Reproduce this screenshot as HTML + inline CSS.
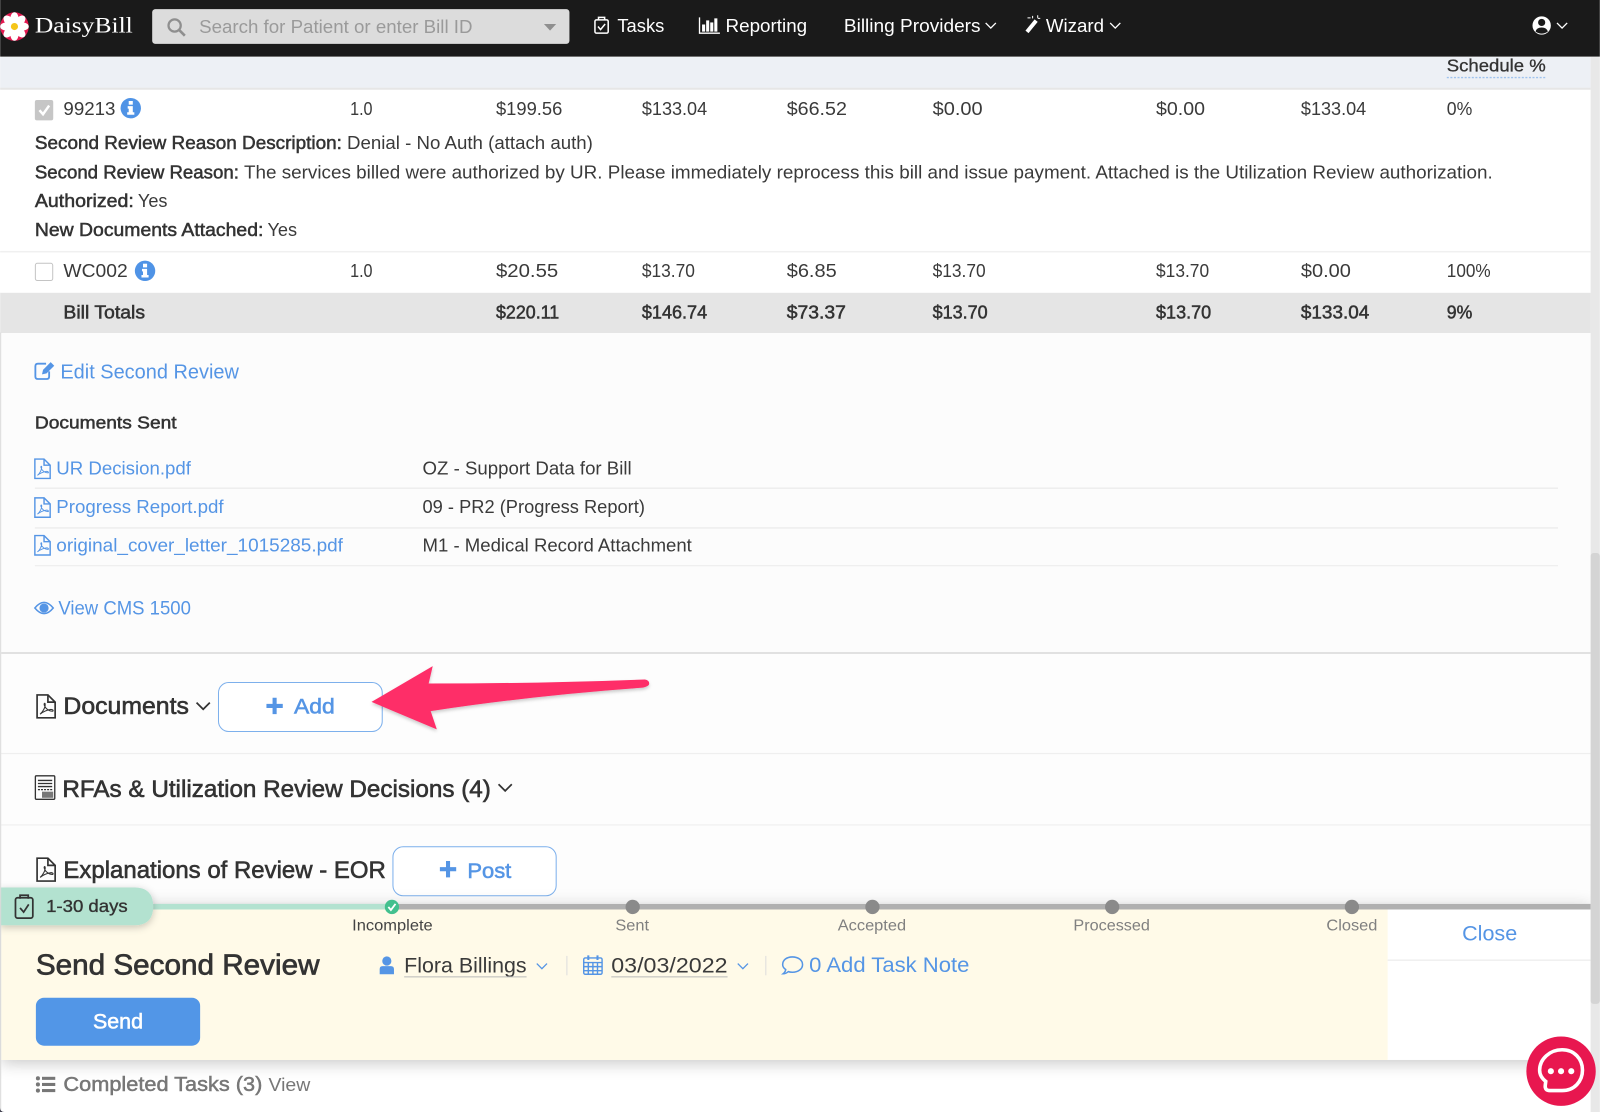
<!DOCTYPE html>
<html lang="en"><head><meta charset="utf-8"><title>DaisyBill</title>
<style>
html,body{margin:0;padding:0;background:#fff;overflow:hidden}
svg{display:block}
text{font-family:"Liberation Sans",sans-serif;font-size:18px;fill:#3a3a3a}
.b{fill:#333;stroke:#333;stroke-width:.5}
.l{fill:#5595e5}
.ls{fill:#5595e5;stroke:#5595e5;stroke-width:.55}
.n{fill:#fff;font-size:18px}
.h{font-size:24px;fill:#333;stroke:#333;stroke-width:.6}
.s{font-size:15px;fill:#808080}
</style></head><body>
<svg xmlns="http://www.w3.org/2000/svg" width="1600" height="1112" viewBox="0 0 1568 1090">
<defs>
<filter id="sh" x="-5%" y="-20%" width="110%" height="140%"><feDropShadow dx="0" dy="3" stdDeviation="8" flood-color="#000" flood-opacity=".22"/></filter>
<filter id="sh2" x="-20%" y="-30%" width="140%" height="170%"><feDropShadow dx="0" dy="2" stdDeviation="4" flood-color="#000" flood-opacity=".22"/></filter>
<filter id="sh3" x="-5%" y="-20%" width="110%" height="140%"><feDropShadow dx="0" dy="2" stdDeviation="1.5" flood-color="#000" flood-opacity=".2"/></filter>
<g id="info"><circle r="10" fill="#4f93e6"/><rect x="-2" y="-7" width="4" height="3.6" fill="#fff"/><path d="M-3-2H2V4H3.5V6.5H-3.5V4H-2V.5H-3Z" fill="#fff"/></g>
<g id="pdf" fill="none" stroke="currentColor" stroke-width="1.4"><path d="M1 1H10L16 7V20H1Z"/><path d="M10 1V7H16"/><path d="M3.5 17C6 15 8 11 7.7 8.5 7.5 7.5 6.5 8 7 9.5 8 12.5 11 14.5 14 14.5 14.8 14 14 13 12.5 13 9 13.5 6 15 3.5 17Z" stroke-width=".9"/></g>
<path id="chev" d="M-5-2.500L0 2.500 5-2.500" fill="none" stroke="currentColor" stroke-width="1.300"/>
<path id="plus" d="M-2-8H2V-2H8V2H2V8H-2V2H-8V-2H-2Z" fill="#5595e5"/>
</defs>

<rect width="1568" height="1090" fill="#fff"/>

<!-- page body -->
<rect x="0" y="56" width="1559" height="31" fill="#edf0f5"/>
<rect x="0" y="86" width="1559" height="2" fill="#e6e6e6"/>
<text x="1418" y="70" textLength="97" lengthAdjust="spacingAndGlyphs" style="font-size:17px;fill:#333;stroke:#333;stroke-width:.3">Schedule %</text>
<line x1="1418" y1="76" x2="1515" y2="76" stroke="#9fc3ee" stroke-width="1.400" stroke-dasharray="2 1.500"/>

<!-- row 1 -->
<rect x="34" y="98" width="18" height="20" rx="2" fill="#c6c6c6"/>
<path d="M38.500 108L42 112 48 103.500" fill="none" stroke="#fff" stroke-width="2.400"/>
<text x="62" y="112.500" textLength="51" lengthAdjust="spacingAndGlyphs">99213</text>
<use href="#info" x="128" y="106"/>
<text x="343" y="112.500" textLength="22" lengthAdjust="spacingAndGlyphs">1.0</text>
<text x="486" y="112.500" textLength="65" lengthAdjust="spacingAndGlyphs">$199.56</text>
<text x="629" y="112.500" textLength="64" lengthAdjust="spacingAndGlyphs">$133.04</text>
<text x="771" y="112.500" textLength="59" lengthAdjust="spacingAndGlyphs">$66.52</text>
<text x="914" y="112.500" textLength="49" lengthAdjust="spacingAndGlyphs">$0.00</text>
<text x="1133" y="112.500" textLength="48" lengthAdjust="spacingAndGlyphs">$0.00</text>
<text x="1275" y="112.500" textLength="64" lengthAdjust="spacingAndGlyphs">$133.04</text>
<text x="1418" y="112.500" textLength="25" lengthAdjust="spacingAndGlyphs">0%</text>

<text class="b" x="34" y="146" textLength="301" lengthAdjust="spacingAndGlyphs">Second Review Reason Description:</text>
<text x="340" y="146" textLength="241" lengthAdjust="spacingAndGlyphs">Denial - No Auth (attach auth)</text>
<text class="b" x="34" y="175" textLength="200" lengthAdjust="spacingAndGlyphs">Second Review Reason:</text>
<text x="239" y="175" textLength="1224" lengthAdjust="spacingAndGlyphs">The services billed were authorized by UR. Please immediately reprocess this bill and issue payment. Attached is the Utilization Review authorization.</text>
<text class="b" x="34" y="203" textLength="97" lengthAdjust="spacingAndGlyphs">Authorized:</text>
<text x="135" y="203" textLength="29" lengthAdjust="spacingAndGlyphs">Yes</text>
<text class="b" x="34" y="231.500" textLength="224" lengthAdjust="spacingAndGlyphs">New Documents Attached:</text>
<text x="262" y="231.500" textLength="29" lengthAdjust="spacingAndGlyphs">Yes</text>
<rect x="0" y="246" width="1559" height="1.500" fill="#f0f0f0"/>

<!-- row 2 -->
<rect x="34.500" y="258" width="17" height="17" rx="2" fill="#fff" stroke="#c4c4c4"/>
<text x="62" y="271.500" textLength="63" lengthAdjust="spacingAndGlyphs">WC002</text>
<use href="#info" x="142" y="265.500"/>
<text x="343" y="271.500" textLength="22" lengthAdjust="spacingAndGlyphs">1.0</text>
<text x="486" y="271.500" textLength="61" lengthAdjust="spacingAndGlyphs">$20.55</text>
<text x="629" y="271.500" textLength="52" lengthAdjust="spacingAndGlyphs">$13.70</text>
<text x="771" y="271.500" textLength="49" lengthAdjust="spacingAndGlyphs">$6.85</text>
<text x="914" y="271.500" textLength="52" lengthAdjust="spacingAndGlyphs">$13.70</text>
<text x="1133" y="271.500" textLength="52" lengthAdjust="spacingAndGlyphs">$13.70</text>
<text x="1275" y="271.500" textLength="49" lengthAdjust="spacingAndGlyphs">$0.00</text>
<text x="1418" y="271.500" textLength="43" lengthAdjust="spacingAndGlyphs">100%</text>

<!-- totals -->
<rect x="0" y="287" width="1559" height="39.500" fill="#e5e5e5"/>
<text class="b" x="62" y="312" textLength="80" lengthAdjust="spacingAndGlyphs">Bill Totals</text>
<text class="b" x="486" y="312" textLength="62" lengthAdjust="spacingAndGlyphs">$220.11</text>
<text class="b" x="629" y="312" textLength="64" lengthAdjust="spacingAndGlyphs">$146.74</text>
<text class="b" x="771" y="312" textLength="58" lengthAdjust="spacingAndGlyphs">$73.37</text>
<text class="b" x="914" y="312" textLength="54" lengthAdjust="spacingAndGlyphs">$13.70</text>
<text class="b" x="1133" y="312" textLength="54" lengthAdjust="spacingAndGlyphs">$13.70</text>
<text class="b" x="1275" y="312" textLength="67" lengthAdjust="spacingAndGlyphs">$133.04</text>
<text class="b" x="1418" y="312" textLength="25" lengthAdjust="spacingAndGlyphs">9%</text>

<!-- detail section -->
<rect x="1" y="326.500" width="1558" height="313" fill="#fcfcfc"/>
<g fill="none" stroke="#5595e5" stroke-width="1.800"><path d="M48 364V369Q48 371.500 45.500 371.500H37Q34.500 371.500 34.500 369V359Q34.500 356.500 37 356.500H45"/></g>
<path d="M41 367L42 362.500 49.500 355 53 358.500 45.500 366Z" fill="#5595e5"/>
<text class="l" x="59" y="371" textLength="175" lengthAdjust="spacingAndGlyphs" style="font-size:20px">Edit Second Review</text>
<text class="b" x="34" y="420" textLength="139" lengthAdjust="spacingAndGlyphs" style="font-size:17px">Documents Sent</text>

<g color="#5595e5"><use href="#pdf" x="33" y="449"/><use href="#pdf" x="33" y="487"/><use href="#pdf" x="33" y="524"/></g>
<text class="l" x="55" y="465" textLength="132" lengthAdjust="spacingAndGlyphs">UR Decision.pdf</text>
<text x="414" y="465" textLength="205" lengthAdjust="spacingAndGlyphs">OZ - Support Data for Bill</text>
<rect x="34" y="478" width="1493" height="1" fill="#e6e6e6"/>
<text class="l" x="55" y="503" textLength="164" lengthAdjust="spacingAndGlyphs">Progress Report.pdf</text>
<text x="414" y="503" textLength="218" lengthAdjust="spacingAndGlyphs">09 - PR2 (Progress Report)</text>
<rect x="34" y="517" width="1493" height="1" fill="#e6e6e6"/>
<text class="l" x="55" y="540.500" textLength="281" lengthAdjust="spacingAndGlyphs">original_cover_letter_1015285.pdf</text>
<text x="414" y="540.500" textLength="264" lengthAdjust="spacingAndGlyphs">M1 - Medical Record Attachment</text>
<rect x="34" y="554" width="1493" height="1" fill="#ececec"/>

<path d="M34 596Q43 585 52 596 43 607 34 596Z" fill="none" stroke="#5595e5" stroke-width="1.500"/><circle cx="43" cy="596" r="4.500" fill="#5595e5"/>
<text class="l" x="57" y="602.500" textLength="130" lengthAdjust="spacingAndGlyphs" style="font-size:19px">View CMS 1500</text>
<rect x="1" y="639.500" width="1558" height="1.200" fill="#cfcfcf"/>

<!-- documents -->
<rect x="1" y="641" width="1558" height="250" fill="#fdfdfd"/>
<g color="#333"><use href="#pdf" transform="translate(35 680) scale(1.180)"/></g>
<text class="h" x="62" y="700" textLength="123" lengthAdjust="spacingAndGlyphs">Documents</text>
<use href="#chev" transform="translate(199 692) scale(1.300)" color="#333"/>
<rect x="214" y="669" width="160.500" height="48" rx="10" fill="#fff" stroke="#7db0ec"/>
<use href="#plus" x="269" y="692"/>
<text class="ls" x="288" y="699.500" textLength="40" lengthAdjust="spacingAndGlyphs" style="font-size:21px">Add</text>

<rect x="1" y="738" width="1558" height="1.200" fill="#efefef"/>
<g fill="none" stroke="#333" stroke-width="1.300"><rect x="34.500" y="760.500" width="19" height="23" rx="1"/><path d="M37 765H51M37 768H51M37 771H51"/><path d="M37 774H51" stroke-dasharray="2 1"/></g>
<rect x="41" y="776" width="11" height="6" fill="#777"/>
<text class="h" x="61" y="781" textLength="420" lengthAdjust="spacingAndGlyphs">RFAs &amp; Utilization Review Decisions (4)</text>
<use href="#chev" transform="translate(495 772) scale(1.300)" color="#333"/>
<rect x="1" y="808" width="1558" height="1.200" fill="#efefef"/>
<g color="#333"><use href="#pdf" transform="translate(35 840) scale(1.180)"/></g>
<text class="h" x="62" y="860.500" textLength="316" lengthAdjust="spacingAndGlyphs">Explanations of Review - EOR</text>
<rect x="385" y="830" width="160" height="48" rx="10" fill="#fff" stroke="#7db0ec"/>
<use href="#plus" x="439" y="852"/>
<text class="ls" x="458" y="860.500" textLength="43" lengthAdjust="spacingAndGlyphs" style="font-size:21px">Post</text>

<!-- arrow -->
<path d="M364 688L424 653 420 670Q530 670 632 666 637 667 636 671 635 673 630 674 520 682 422 697L428 715Z" fill="#fe2d68" filter="url(#sh3)"/>

<!-- bottom task panel -->
<rect x="1" y="886" width="1558" height="153" fill="#fff" filter="url(#sh)"/>
<rect x="1" y="891" width="1359" height="148" fill="#fffae8"/>
<rect x="150" y="886" width="1409" height="5.500" fill="#b0b0b0"/>
<rect x="150" y="886" width="234" height="5.500" fill="#b3e2d0"/>
<path d="M0 870H132Q150 870 150 888.500 150 907 132 907H0Z" fill="#b3e2d0" filter="url(#sh2)"/>
<g fill="none" stroke="#333" stroke-width="1.700"><rect x="15" y="880" width="17" height="20" rx="2"/><path d="M19.500 881V877.500H27.500V881"/><path d="M19.500 890L23 894 28 886.500"/></g>
<text x="45" y="894" textLength="80" lengthAdjust="spacingAndGlyphs" style="font-size:17px;fill:#333;stroke:#333;stroke-width:.35">1-30 days</text>

<circle cx="384" cy="889" r="7" fill="#42c08e"/><path d="M380.500 889L383 892 387.500 886" fill="none" stroke="#fff" stroke-width="1.800"/>
<circle cx="620" cy="889" r="7" fill="#8a8a8a"/><circle cx="855" cy="889" r="7" fill="#8a8a8a"/><circle cx="1090" cy="889" r="7" fill="#8a8a8a"/><circle cx="1325" cy="889" r="7" fill="#8a8a8a"/>
<text class="s" x="345" y="912" textLength="79" lengthAdjust="spacingAndGlyphs" style="fill:#444">Incomplete</text>
<text class="s" x="603" y="912" textLength="33" lengthAdjust="spacingAndGlyphs">Sent</text>
<text class="s" x="821" y="912" textLength="67" lengthAdjust="spacingAndGlyphs">Accepted</text>
<text class="s" x="1052" y="912" textLength="75" lengthAdjust="spacingAndGlyphs">Processed</text>
<text class="s" x="1300" y="912" textLength="50" lengthAdjust="spacingAndGlyphs">Closed</text>

<text class="l" x="1433" y="922" textLength="54" lengthAdjust="spacingAndGlyphs" style="font-size:21px">Close</text>
<rect x="1360" y="940.500" width="199" height="1.400" fill="#eee"/>

<text class="b" x="35" y="955" textLength="278" lengthAdjust="spacingAndGlyphs" style="font-size:28px;stroke-width:.7">Send Second Review</text>

<circle cx="379" cy="942" r="4.500" fill="#5595e5"/><path d="M372 955V950Q372 947 375 947H383Q386 947 386 950V955Z" fill="#5595e5"/>
<text x="396" y="953.500" textLength="120" lengthAdjust="spacingAndGlyphs" style="font-size:21px">Flora Billings</text>
<line x1="396" y1="957.500" x2="516" y2="957.500" stroke="#b9b9b9"/>
<use href="#chev" x="531" y="947" color="#5595e5"/>
<rect x="555" y="937" width="1" height="19" fill="#ddd"/>
<g fill="none" stroke="#5595e5" stroke-width="1.400"><rect x="572" y="939" width="18" height="16" rx="1.500"/><path d="M572 943.500H590M576.500 944V955M581 944V955M585.500 944V955M572 947.500H590M572 951.500H590"/><path d="M576.500 936.500V941M585.500 936.500V941" stroke-width="2"/></g>
<text x="599" y="953.500" textLength="114" lengthAdjust="spacingAndGlyphs" style="font-size:21px">03/03/2022</text>
<line x1="599" y1="957.500" x2="713" y2="957.500" stroke="#b9b9b9"/>
<use href="#chev" x="728" y="947" color="#5595e5"/>
<rect x="750" y="937" width="1" height="19" fill="#ddd"/>
<path d="M776.500 938C782 938 786.500 941 786.500 945.500 786.500 950 782 953 776.500 953 775 953 773.500 952.800 772.500 952.400 771 953.800 769 954.500 767.500 954.500 769 953.300 769.800 951.800 770 950.300 768 949 767 947.400 767 945.500 767 941 771 938 776.500 938Z" fill="none" stroke="#5595e5" stroke-width="1.500"/>
<text class="l" x="793" y="953" textLength="157" lengthAdjust="spacingAndGlyphs" style="font-size:21px">0 Add Task Note</text>

<rect x="35" y="978" width="161" height="47" rx="8" fill="#5296e7"/>
<text x="91" y="1008" textLength="49" lengthAdjust="spacingAndGlyphs" style="font-size:21px;fill:#fff;stroke:#fff;stroke-width:.55">Send</text>

<!-- completed tasks -->
<g fill="#777"><circle cx="37" cy="1057" r="2"/><circle cx="37" cy="1063" r="2"/><circle cx="37" cy="1069" r="2"/><rect x="41" y="1055.500" width="13" height="3"/><rect x="41" y="1061.500" width="13" height="3"/><rect x="41" y="1067.500" width="13" height="3"/></g>
<text x="62" y="1069.500" textLength="195" lengthAdjust="spacingAndGlyphs" style="font-size:20px;fill:#777;stroke:#777;stroke-width:.5">Completed Tasks (3)</text>
<text x="263" y="1069.500" textLength="41" lengthAdjust="spacingAndGlyphs" style="fill:#777">View</text>

<!-- scrollbar -->
<rect x="1559" y="56" width="9" height="1034" fill="#e8e8e8"/>
<rect x="1559" y="542" width="9" height="442" rx="3" fill="#d4d4d4"/>

<!-- left edge -->
<rect x="0" y="326" width="1" height="764" fill="#d9d9d9"/>
<path d="M0 1086V1090H4Q0 1090 0 1086Z" fill="#223"/>

<!-- nav -->
<rect width="1568" height="55.500" fill="#1a1a1a"/>
<circle cx="14" cy="26" r="14" fill="#e4174f"/>
<g fill="#fff"><ellipse cx="14" cy="18" rx="4" ry="6"/><ellipse cx="14" cy="34" rx="4" ry="6"/><ellipse cx="6" cy="26" rx="6" ry="4"/><ellipse cx="22" cy="26" rx="6" ry="4"/><ellipse cx="14" cy="18" rx="4" ry="6" transform="rotate(45 14 26)"/><ellipse cx="14" cy="18" rx="4" ry="6" transform="rotate(135 14 26)"/><ellipse cx="14" cy="18" rx="4" ry="6" transform="rotate(225 14 26)"/><ellipse cx="14" cy="18" rx="4" ry="6" transform="rotate(315 14 26)"/></g>
<circle cx="14" cy="26" r="3.500" fill="#f5c518"/>
<text x="34" y="32" textLength="96" lengthAdjust="spacingAndGlyphs" style="font-family:'Liberation Serif',serif;font-size:22px;fill:#fff">DaisyBill</text>

<rect x="149" y="9" width="409" height="34" rx="3" fill="#dcdcdc"/>
<circle cx="171" cy="25" r="6" fill="none" stroke="#8f8f8f" stroke-width="2.200"/><path d="M175.500 29.500L181 35" stroke="#8f8f8f" stroke-width="2.600"/>
<text x="195" y="32.500" textLength="268" lengthAdjust="spacingAndGlyphs" style="fill:#9a9a9a">Search for Patient or enter Bill ID</text>
<path d="M533 23.500H545L539 30Z" fill="#8f8f8f"/>

<g fill="none" stroke="#fff" stroke-width="1.500"><rect x="583" y="19.500" width="13" height="13" rx="1.500"/><path d="M586.500 19.500V17H592.500V19.500"/><path d="M586 26L588.500 29 593 23.500"/></g>
<text class="n" x="605" y="31.500" textLength="46" lengthAdjust="spacingAndGlyphs">Tasks</text>
<path d="M685.500 17V32.500H705.500" fill="none" stroke="#fff" stroke-width="1.300"/>
<g fill="#fff"><rect x="688" y="24" width="3" height="7"/><rect x="692" y="20" width="3" height="11"/><rect x="696" y="22" width="3" height="9"/><rect x="700" y="18" width="3" height="13"/></g>
<text class="n" x="711" y="31.500" textLength="80" lengthAdjust="spacingAndGlyphs">Reporting</text>
<text class="n" x="827" y="31.500" textLength="134" lengthAdjust="spacingAndGlyphs">Billing Providers</text>
<use href="#chev" x="971" y="25" color="#fff"/>
<path d="M1005 30L1014 19 1017 21.500 1008 32.500Z" fill="#fff"/><path d="M1012 15.500V18M1017 15V17.500M1019.500 18H1017M1007 17.500H1010" stroke="#fff" stroke-width="1"/>
<text class="n" x="1025" y="31.500" textLength="57" lengthAdjust="spacingAndGlyphs">Wizard</text>
<use href="#chev" x="1093" y="25" color="#fff"/>
<circle cx="1511" cy="25" r="9" fill="#fff"/><circle cx="1511" cy="22" r="3.500" fill="#1a1a1a"/><path d="M1505 31Q1506 27 1511 27 1516 27 1517 31 1511 35 1505 31Z" fill="#1a1a1a"/>
<use href="#chev" x="1531" y="25" color="#fff"/>

<!-- chat -->
<circle cx="1530" cy="1050" r="34" fill="#e8174f"/>
<path d="M1531 1029C1543 1029 1551 1038 1551 1049 1551 1060 1543 1069 1531 1069H1519Q1514 1069 1514.500 1064L1515 1060C1511 1057 1509 1053 1509 1049 1509 1038 1519 1029 1531 1029Z" fill="none" stroke="#fff" stroke-width="3.500"/>
<circle cx="1520" cy="1050" r="3" fill="#fff"/><circle cx="1530" cy="1050" r="3" fill="#fff"/><circle cx="1540" cy="1050" r="3" fill="#fff"/>
</svg>
</body></html>
